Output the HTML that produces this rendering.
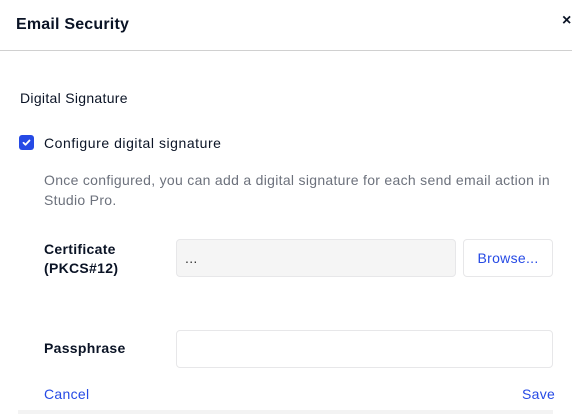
<!DOCTYPE html>
<html><head><style>
*{margin:0;padding:0;box-sizing:border-box}
body{width:572px;height:414px;background:#fff;font-family:"Liberation Sans",sans-serif;color:#0a1325;position:relative;overflow:hidden}
.a{position:absolute;white-space:nowrap;letter-spacing:0.3px}
</style></head><body>
<div class="a" style="left:16px;top:16px;font-size:16px;font-weight:bold;letter-spacing:0.2px">Email Security</div>
<div class="a" style="left:562px;top:12px;font-size:16px;font-weight:bold">×</div>
<div class="a" style="left:0;top:50px;width:572px;height:1px;background:#d0d0d0"></div>
<div class="a" style="left:20px;top:90px;font-size:14px">Digital Signature</div>
<div class="a" style="left:19px;top:135px;width:15px;height:15px;background:#264ae5;border-radius:3px">
<svg width="15" height="15" viewBox="0 0 15 15" style="position:absolute;left:0;top:0"><path d="M4.5 7.8 L6.5 9.8 L10.5 5.5" stroke="#fff" stroke-width="1.8" fill="none" stroke-linecap="round" stroke-linejoin="round"/></svg></div>
<div class="a" style="left:44px;top:135px;font-size:14px;letter-spacing:0.55px">Configure digital signature</div>
<div class="a" style="left:44px;top:170px;font-size:14px;color:#6c717c;line-height:20px;letter-spacing:0.3px">Once configured, you can add a digital signature for each send email action in<br>Studio Pro.</div>
<div class="a" style="left:44px;top:240px;font-size:14px;font-weight:bold;line-height:19px">Certificate<br>(PKCS#12)</div>
<div class="a" style="left:176px;top:239px;width:280px;height:38px;background:#f5f5f5;border:1px solid #e7e7e9;border-radius:4px;font-size:14px;padding:10px 8px;color:#333">...</div>
<div class="a" style="left:463px;top:239px;width:90px;height:38px;border:1px solid #e7e7e9;border-radius:4px;font-size:14px;color:#264ae5;text-align:center;line-height:36px">Browse...</div>
<div class="a" style="left:44px;top:340px;font-size:14px;font-weight:bold">Passphrase</div>
<div class="a" style="left:176px;top:330px;width:377px;height:38px;border:1px solid #e7e7e9;border-radius:4px"></div>
<div class="a" style="left:44px;top:386px;font-size:14px;color:#264ae5">Cancel</div>
<div class="a" style="left:522px;top:386px;font-size:14px;color:#264ae5">Save</div>
<div class="a" style="left:18px;top:410px;width:535px;height:4px;background:#f3f3f3"></div>
</body></html>
